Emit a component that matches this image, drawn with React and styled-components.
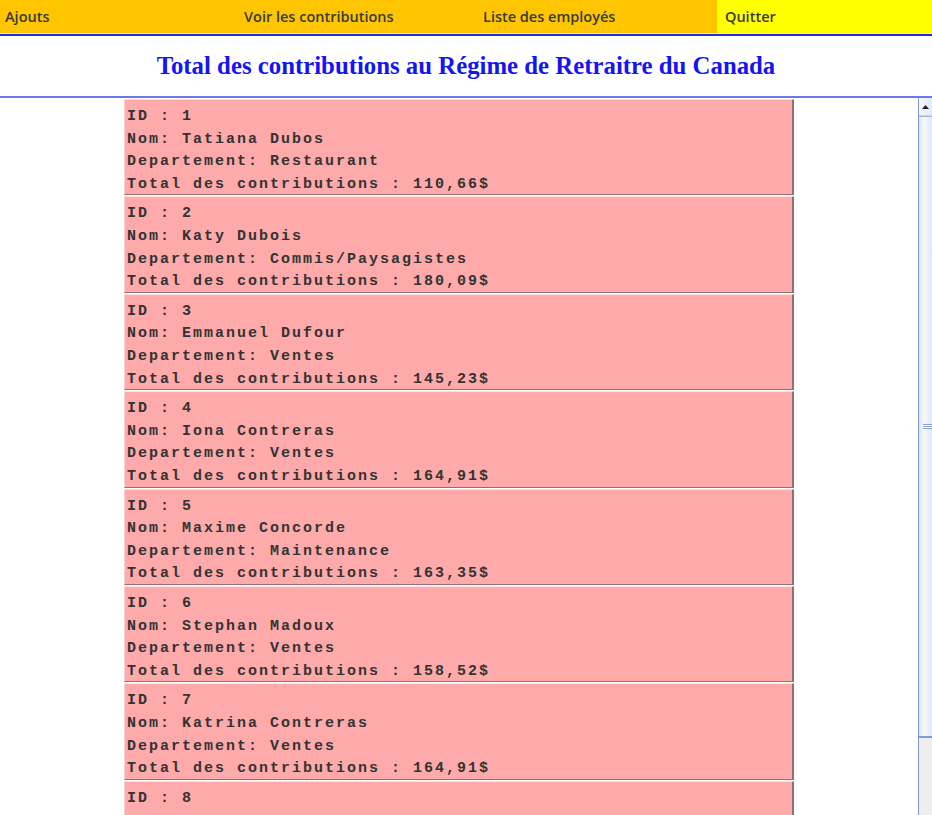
import React from "react"
import styled, { createGlobalStyle } from "styled-components"

const employes = [
  { id: 1, nom: "Tatiana Dubos", dept: "Restaurant", total: "110,66" },
  { id: 2, nom: "Katy Dubois", dept: "Commis/Paysagistes", total: "180,09" },
  { id: 3, nom: "Emmanuel Dufour", dept: "Ventes", total: "145,23" },
  { id: 4, nom: "Iona Contreras", dept: "Ventes", total: "164,91" },
  { id: 5, nom: "Maxime Concorde", dept: "Maintenance", total: "163,35" },
  { id: 6, nom: "Stephan Madoux", dept: "Ventes", total: "158,52" },
  { id: 7, nom: "Katrina Contreras", dept: "Ventes", total: "164,91" },
  // only the id of the 8th row is visible above the fold
  { id: 8 },
]

const navItems = [
  { label: "Ajouts" },
  { label: "Voir les contributions" },
  { label: "Liste des employés" },
  { label: "Quitter", active: true },
]

const App = () => {
  return (
    <>
      <GlobalStyle />
      <Page>
        <Nav>
          {navItems.map((item) => (
            <NavItem key={item.label} $active={item.active}>
              {item.label}
            </NavItem>
          ))}
        </Nav>
        <Header>
          <Title>Total des contributions au Régime de Retraitre du Canada</Title>
        </Header>
        <Body>
          <Content>
            <List>
              {employes.map((e) => (
                <Card key={e.id}>
                  <Line>ID : {e.id}</Line>
                  {e.nom && <Line>Nom: {e.nom}</Line>}
                  {e.dept && <Line>Departement: {e.dept}</Line>}
                  {e.total && <Line>Total des contributions : {e.total}$</Line>}
                </Card>
              ))}
            </List>
          </Content>
          <Scrollbar>
            <ArrowButton>
              <svg width="7" height="4" viewBox="0 0 7 4">
                <path d="M0 4 L3.5 0 L7 4 Z" fill="#222" />
              </svg>
            </ArrowButton>
            <Thumb>
              <Grip />
            </Thumb>
            <Track />
          </Scrollbar>
        </Body>
      </Page>
    </>
  )
}

export default App

const GlobalStyle = createGlobalStyle`
  html, body {
    margin: 0;
    padding: 0;
    height: 100%;
    overflow: hidden;
    background: #ffffff;
  }
  #root {
    height: 100%;
  }
`

const Page = styled.div`
  display: flex;
  flex-direction: column;
  height: 100vh;
`

const Nav = styled.nav`
  display: flex;
  height: 33px;
  background-color: #ffc600;
  border-bottom: 1px solid #e8e8f0;
  box-shadow: 0 2px 0 #2a2ae0;
  margin-bottom: 2px;
  overflow: hidden;
`

const NavItem = styled.div`
  flex: 0 0 239px;
  display: flex;
  align-items: center;
  padding-left: ${(p) => (p.$active ? "8px" : "5px")};
  box-sizing: border-box;
  background-color: ${(p) => (p.$active ? "#ffff00" : "transparent")};
  font-family: "Open Sans", "Liberation Sans", sans-serif;
  font-size: 14.5px;
  font-weight: 600;
  color: #3a3a3a;
  &:last-child {
    flex: 1;
  }
`

const Header = styled.header`
  display: flex;
  justify-content: center;
  align-items: center;
  height: 60px;
  border-bottom: 2px solid #6c78e8;
`

const Title = styled.h1`
  margin: 0;
  font-family: "Liberation Serif", "Times New Roman", serif;
  font-size: 24.8px;
  font-weight: 700;
  color: #1414f5;
`

const Body = styled.div`
  flex: 1;
  display: flex;
  min-height: 0;
`

const Content = styled.div`
  flex: 1;
  overflow: hidden;
`

const List = styled.div`
  width: 670px;
  margin: 1px auto 0;
  display: flex;
  flex-direction: column;
  row-gap: 1px;
`

const Card = styled.div`
  display: flex;
  flex-direction: column;
  box-sizing: border-box;
  min-height: 96.4px;
  padding: 6px 2px 0 2px;
  background-color: #ffaaaa;
  border-style: solid;
  border-width: 1px 2px 1px 1px;
  border-color: #ffdede #8e7076 #8e7076 #ffd0d0;
`

const Line = styled.div`
  height: 22.6px;
  line-height: 22.6px;
  font-family: "Liberation Mono", "Courier New", monospace;
  font-size: 15px;
  font-weight: 700;
  letter-spacing: 2px;
  color: #333333;
  white-space: pre;
  &:nth-child(4) {
    height: 20.6px;
  }
`

const Scrollbar = styled.div`
  flex: 0 0 13px;
  display: flex;
  flex-direction: column;
  border-left: 1px solid #7f98d8;
  background: #eeeeee;
`

const ArrowButton = styled.div`
  height: 17px;
  display: flex;
  align-items: center;
  justify-content: center;
  background: linear-gradient(to right, #f4f7fc, #e2e9f6);
  border-bottom: 1px solid #c4d0e8;
`

const Thumb = styled.div`
  height: 622px;
  display: flex;
  align-items: center;
  justify-content: center;
  background: linear-gradient(to right, #dbe5f5, #f6f9fd 45%, #dde6f4);
  border-top: 1px solid #a6b8e0;
  border-bottom: 2px solid #7f98d8;
  box-sizing: border-box;
`

const Grip = styled.div`
  width: 9px;
  height: 5px;
  margin-left: 3px;
  border-top: 1px solid #8aa0d8;
  border-bottom: 1px solid #8aa0d8;
  box-shadow: inset 0 1px 0 #fff, inset 0 -1px 0 #fff;
  background: #8aa0d8;
  background-clip: content-box;
  padding: 1px 0;
  box-sizing: border-box;
`

const Track = styled.div`
  flex: 1;
  background: #eeeeee;
`
